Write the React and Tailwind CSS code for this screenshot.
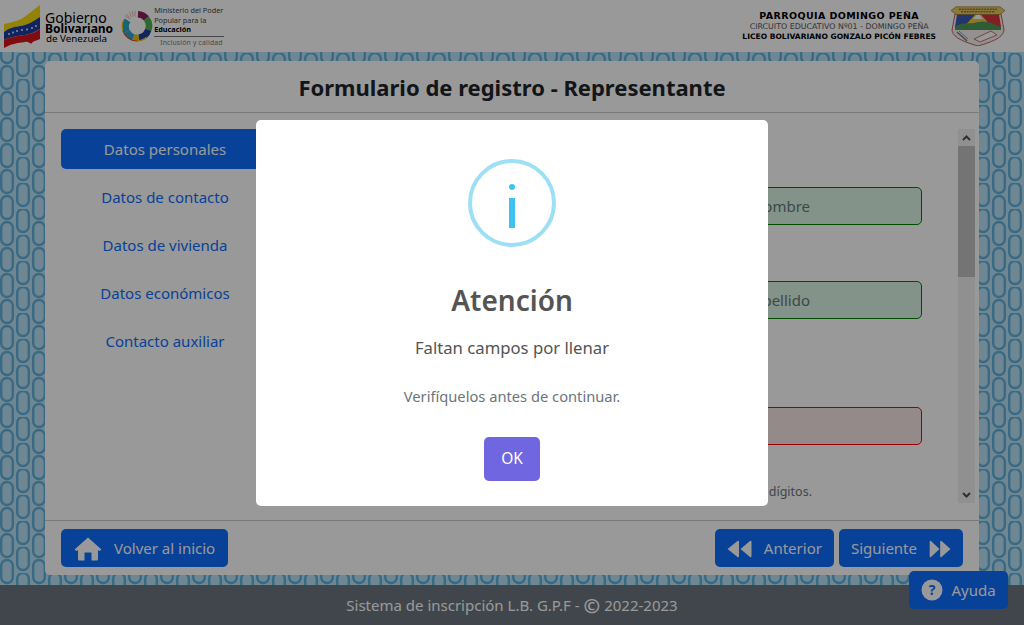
import React from "react";

const font = { fontFamily: '"Noto Sans", "Open Sans", sans-serif' };

function Flag() {
  return (
    <svg width="38" height="44" viewBox="0 0 38 44" className="shrink-0">
      <path d="M1 20 C10 18 17 17 24 11 C29 7 33 4 37 1 L37 14 C30 18 24 21 16 22 C10 23 5 25 1 28 Z" fill="#f5d90a" />
      <path d="M1 28 C6 24 11 23 17 22 C25 21 31 17 37 13 L37 25 C32 28 28 30 22 31 C14 32 7 33 1 36 Z" fill="#1c3f9e" />
      <path d="M1 36 C7 33 14 32 22 31 C28 30 33 28 37 25 L37 35 C34 37 31 36 29 39 C27 41 26 37 22 38 C14 39 8 40 1 44 Z" fill="#d8141c" />
      <g fill="#fff">
        <circle cx="6" cy="30" r="0.9" /><circle cx="10" cy="28.5" r="0.9" /><circle cx="14" cy="27" r="0.9" />
        <circle cx="19" cy="26" r="0.9" /><circle cx="24" cy="25.5" r="0.9" /><circle cx="29" cy="24" r="0.9" /><circle cx="33" cy="22" r="0.9" />
      </g>
    </svg>
  );
}

function Ring() {
  const seg = (color, d) => <path d={d} fill="none" stroke={color} strokeWidth="7" />;
  return (
    <svg width="32" height="32" viewBox="0 0 34 34" className="shrink-0">
      {seg("#8a1f5e", "M18 4.5 A12.5 12.5 0 0 1 27 9")}
      {seg("#4caf50", "M27 9 A12.5 12.5 0 0 1 29 21")}
      {seg("#1f3f99", "M29 21 A12.5 12.5 0 0 1 19 29.5")}
      {seg("#e3c21b", "M19 29.5 A12.5 12.5 0 0 1 13 29")}
      {seg("#2aa6c9", "M13 29 A12.5 12.5 0 0 1 6 23")}
      {seg("#2aa6c9", "M6 23 A12.5 12.5 0 0 1 7 11")}
      <path d="M17 33 A16 16 0 0 1 2 22" fill="none" stroke="#e2492f" strokeWidth="1.2" />
      <path d="M2 22 A16 16 0 0 1 3 10" fill="none" stroke="#f1c40f" strokeWidth="1.2" />
      <path d="M17 33 A16 16 0 0 0 27 29" fill="none" stroke="#f1c40f" strokeWidth="1.2" />
      <g stroke="#e79a8c" strokeWidth="0.7">
        <path d="M9 9 L6 4" /><path d="M11 8 L9 2" /><path d="M13 7 L12 1" /><path d="M15 7 L15 1" /><path d="M10 10 L4 6" />
      </g>
    </svg>
  );
}

function Crest() {
  return (
    <svg width="56" height="40" viewBox="0 0 56 40" className="shrink-0">
      <path d="M5 8 H51 L54 24 C53 31 45 35 28 40 C11 35 3 31 2 24 Z" fill="#f4f2ee" stroke="#c0444c" strokeWidth="0.9" />
      <path d="M7 8 H26 L14 21 H5 Z" fill="#3b5bb5" />
      <path d="M30 8 H49 L51 21 H42 Z" fill="#d8343a" />
      <path d="M14 21 L26 8 H30 L42 21 Z" fill="#f0c93a" />
      <path d="M23 13 L28 7 L33 13 Z" fill="#fff" />
      <path d="M5 21 C13 15 19 19 28 16 C37 14 44 18 51 21 L51 24 H5 Z" fill="#4f9a58" />
      <path d="M7 26 L17 35" stroke="#777" strokeWidth="1.4" />
      <path d="M9 25 L18 33" stroke="#3b5bb5" strokeWidth="0.6" />
      <path d="M24 33 L41 25 L47 29 L30 36 Z" fill="#fff" stroke="#b05058" strokeWidth="0.8" />
      <path d="M1 4.5 L6 0.8 H50 L55 4.5 L50 8.5 H6 Z" fill="#e8c860" stroke="#8a6a20" strokeWidth="0.6" />
      <path d="M9 3.2 H47 M11 5.8 H45" stroke="#333" strokeWidth="0.8" strokeDasharray="2 0.8" />
    </svg>
  );
}

function Pattern() {
  return (
    <svg className="absolute inset-0 w-full h-full" aria-hidden="true">
      <defs>
        <pattern id="pills" x="0" y="1" width="32" height="26" patternUnits="userSpaceOnUse">
          <g fill="none" stroke="#5fb0dc" strokeWidth="2.4">
            <rect x="1.2" y="13" width="11.6" height="23" rx="5.8" />
            <rect x="1.2" y="-13" width="11.6" height="23" rx="5.8" />
            <rect x="17.2" y="0" width="11.6" height="23" rx="5.8" />
          </g>
        </pattern>
      </defs>
      <rect width="100%" height="100%" fill="#b8e2f5" />
      <rect width="100%" height="100%" fill="url(#pills)" />
    </svg>
  );
}

function Field({ text, color, tint }) {
  return (
    <div className="h-[38px] pt-px flex items-center justify-end rounded-[5px] border pr-[111px] text-[15px] text-[#6c757d]" style={{ borderColor: color, backgroundColor: tint }}>
      {text}
    </div>
  );
}

function Tab({ label, active }) {
  return (
    <div className={active ? "h-10 pt-px flex items-center justify-center rounded-[5px] bg-[#0d6efd] text-white text-[15px]" : "h-10 pt-px flex items-center justify-center text-[#0d6efd] text-[15px]"}>
      {label}
    </div>
  );
}

const Btn = ({ children, className }) => (
  <div className={"h-[38px] pt-px flex items-center rounded-[5px] bg-[#0d6efd] text-white text-[15px] " + className}>{children}</div>
);

export default function App() {
  return (
    <div className="relative w-[1024px] h-[625px] overflow-hidden flex flex-col bg-white" style={font}>
      <header className="h-[52px] shrink-0 bg-white flex items-center justify-between pl-[3px] pr-[18px]">
        <div className="flex items-center">
          <Flag />
          <div className="ml-[4px] mt-[2px] flex flex-col text-black">
            <span className="text-[14px] leading-[13px]">Gobierno</span>
            <span className="text-[12px] leading-[10px] font-bold">Bolivariano</span>
            <span className="ml-px text-[9.8px] leading-[9px]">de Venezuela</span>
          </div>
          <div className="ml-[8px]"><Ring /></div>
          <div className="ml-px mt-[2px] w-[70px] flex flex-col text-[7.3px] leading-[9.5px] text-[#444]">
            <span className="whitespace-nowrap">Ministerio del Poder</span>
            <span>Popular para la</span>
            <span className="font-bold text-black">Educación</span>
            <span className="mt-px border-t border-[#777] pl-[6px] text-[6.8px] leading-[11px] tracking-[0.2px] text-[#777] whitespace-nowrap">Inclusión y calidad</span>
          </div>
        </div>
        <div className="flex items-center gap-[14px]">
          <div className="flex flex-col items-center" style={{ fontFamily: '"DejaVu Sans", sans-serif' }}>
            <span className="mb-px text-[9.5px] leading-[10px] font-bold tracking-[0.4px] text-black">PARROQUIA DOMINGO PEÑA</span>
            <span className="text-[7.9px] leading-[10px] text-[#555]">CIRCUITO EDUCATIVO Nº01 - DOMINGO PEÑA</span>
            <span className="text-[7.55px] leading-[10px] font-bold text-black">LICEO BOLIVARIANO GONZALO PICÓN FEBRES</span>
          </div>
          <Crest />
        </div>
      </header>

      <main className="relative flex-1 min-h-0 px-[45px] pt-[9px] pb-[10px]">
        <Pattern />
        <div className="relative h-full rounded-[5px] bg-white flex flex-col">
          <div className="h-[52px] pt-[2px] shrink-0 border-b border-[#ccc] flex items-center justify-center text-[22px] font-bold text-[#212529]">
            Formulario de registro - Representante
          </div>
          <div className="flex-1 min-h-0 flex pl-4 pr-1 pt-4">
            <nav className="w-[208px] shrink-0 flex flex-col gap-2">
              <Tab label="Datos personales" active />
              <Tab label="Datos de contacto" />
              <Tab label="Datos de vivienda" />
              <Tab label="Datos económicos" />
              <Tab label="Contacto auxiliar" />
            </nav>
            <div className="flex-1 min-w-0 flex pb-[17px]">
              <div className="flex-1 min-w-0 pl-5 pr-9 flex flex-col">
                <div className="mt-[58px]"><Field text="Primer nombre" color="#008000" tint="#daf6e4" /></div>
                <div className="mt-[56px]"><Field text="Primer apellido" color="#008000" tint="#daf6e4" /></div>
                <div className="mt-[88px]"><Field text="" color="#ff0000" tint="#f8e6e6" /></div>
                <div className="mt-[38px] flex justify-end pr-[110px] text-[12.5px] text-[#6c757d]">dígitos.</div>
              </div>
              <div className="w-[17px] shrink-0 flex flex-col bg-[#f1f1f1]">
                <div className="h-[17px] flex items-center justify-center">
                  <svg width="9" height="6" viewBox="0 0 9 6"><path d="M1 5 L4.5 1.5 L8 5" fill="none" stroke="#505050" strokeWidth="2" /></svg>
                </div>
                <div className="h-[131px] bg-[#c1c1c1]" />
                <div className="flex-1" />
                <div className="h-[17px] flex items-center justify-center">
                  <svg width="9" height="6" viewBox="0 0 9 6"><path d="M1 1 L4.5 4.5 L8 1" fill="none" stroke="#505050" strokeWidth="2" /></svg>
                </div>
              </div>
            </div>
          </div>
          <div className="h-[55px] shrink-0 border-t border-[#ccc] flex items-center justify-between pl-4 pr-4">
            <Btn className="pl-[13px] pr-[13px] gap-[12px]">
              <svg width="28" height="24" viewBox="0 0 28 24" fill="currentColor"><path d="M14 0.5 L27.5 12.5 L25.5 14 L24 13 V22 Q24 23.5 22.5 23.5 H17.5 V15.5 H10.5 V23.5 H5.5 Q4 23.5 4 22 V13 L2.5 14 L0.5 12.5 Z" /></svg>
              Volver al inicio
            </Btn>
            <div className="flex gap-[5px]">
              <Btn className="px-3 gap-3">
                <svg width="25" height="18" viewBox="0 0 25 18" fill="currentColor"><path d="M0.5 9 L10.5 1 Q12 0.2 12 2 V16 Q12 17.8 10.5 17 Z" /><path d="M13.5 9 L23 1 Q24.5 0.2 24.5 2 V16 Q24.5 17.8 23 17 Z" /></svg>
                Anterior
              </Btn>
              <Btn className="px-3 gap-3">
                Siguiente
                <svg width="22" height="18" viewBox="0 0 22 18" fill="currentColor"><path d="M21.5 9 L12.5 1 Q11.2 0.2 11.2 2 V16 Q11.2 17.8 12.5 17 Z" /><path d="M10.5 9 L2 1 Q0.7 0.2 0.7 2 V16 Q0.7 17.8 2 17 Z" /></svg>
              </Btn>
            </div>
          </div>
        </div>
      </main>

      <footer className="h-10 pt-px shrink-0 bg-[#6c757d] flex items-center justify-center text-white text-[15px]">
        Sistema de inscripción L.B. G.P.F - <span className="mx-[4px] font-bold text-[20px] leading-none">©</span> 2022-2023
      </footer>

      <div className="absolute left-[909px] top-[571px] w-[99px] h-[38px] rounded-[5px] bg-[#0d6efd] text-white text-[15px] flex items-center justify-center gap-2">
        <svg width="22" height="22" viewBox="0 0 22 22"><circle cx="11" cy="11" r="10.5" fill="currentColor" /><text x="11" y="16" textAnchor="middle" fontSize="14" fontWeight="700" fill="#0d6efd">?</text></svg>
        Ayuda
      </div>

      <div className="absolute inset-0 bg-black/40 flex items-center justify-center">
        <div className="absolute left-[256px] top-[120px] w-[512px] h-[386px] rounded-[5px] bg-white flex flex-col items-center">
          <div className="mt-[39px] w-[88px] h-[88px] rounded-full border-4 border-[#9de0f6] flex flex-col items-center justify-center pt-[6px]">
            <div className="w-[6px] h-[6px] rounded-full bg-[#3fc3ee]" />
            <div className="mt-[8px] w-[6px] h-[30px] bg-[#3fc3ee]" />
          </div>
          <h2 className="mt-[31px] text-[28px] leading-[45px] font-semibold text-[#545454]">Atención</h2>
          <p className="mt-[13px] text-[16.7px] leading-[24px] text-[#545454]">Faltan campos por llenar</p>
          <p className="mt-[26px] text-[14.7px] leading-[21px] text-[#6c757d]">Verifíquelos antes de continuar.</p>
          <div className="mt-[30px] w-[56px] h-[44px] rounded-[5px] bg-[#7066e0] text-white text-[15.5px] flex items-center justify-center">OK</div>
        </div>
      </div>
    </div>
  );
}
